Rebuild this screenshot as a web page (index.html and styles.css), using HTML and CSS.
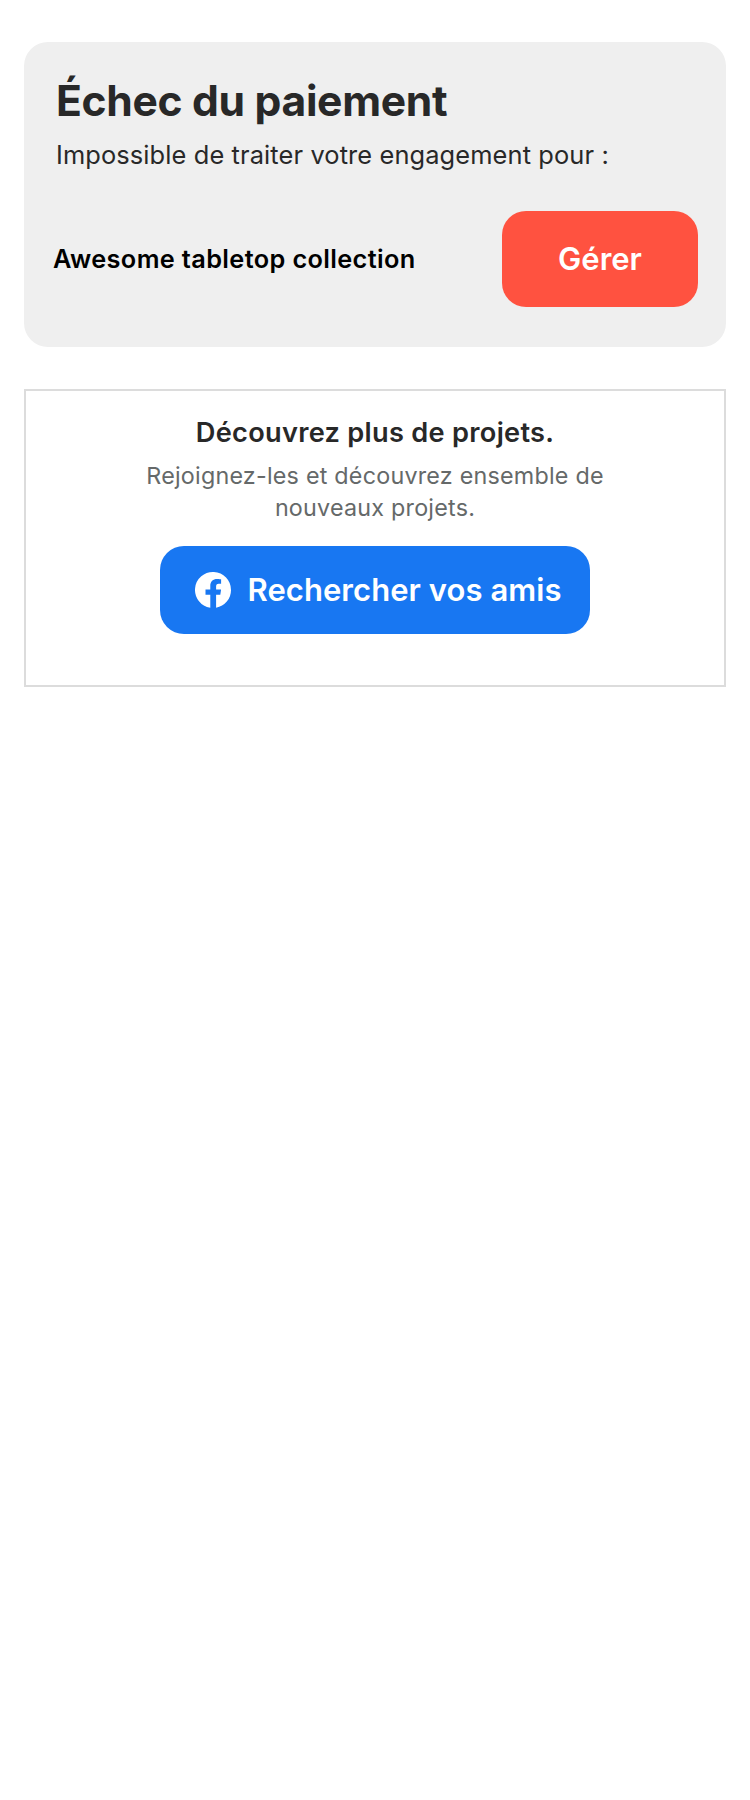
FILE: index.html
```html
<!DOCTYPE html>
<html lang="fr">
<head>
<meta charset="utf-8">
<title>Échec du paiement</title>
<link rel="stylesheet" href="styles.css">
</head>
<body>
<main class="page">
<section class="alert">
<h1 class="alert-title">Échec du paiement</h1>
<p class="alert-text">Impossible de traiter votre engagement pour :</p>
<div class="alert-row">
<span class="project">Awesome tabletop collection</span>
<button class="manage"><span class="manage-label">Gérer</span></button>
</div>
</section>
<section class="discover">
<h2 class="discover-title">Découvrez plus de projets.</h2>
<p class="discover-text"><span class="line-one">Rejoignez-les et découvrez ensemble de</span><br><span class="line-two">nouveaux projets.</span></p>
<button class="friends">
<svg class="fb" viewBox="0 0 36 36" aria-hidden="true"><path fill="#fff" d="M36 18A18 18 0 1 0 15.3 35.8V22.8H10.5V17.6h4.8v-3.7c0-4.5 2.7-6.9 6.8-6.9 2 0 4 .35 4 .35v4.4h-2.3c-2.2 0-2.7 1.4-2.7 2.8V17.6h5l-.8 5.2h-4.2v13A18 18 0 0 0 36 18Z"/></svg>
<span class="friends-label">Rechercher vos amis</span>
</button>
</section>
</main>
</body>
</html>
```

FILE: styles.css
```css
* { box-sizing: border-box; }
body { margin: 0; background: #fff; font-family: Inter, sans-serif; }
h1, h2, p { margin: 0; }
button { border: 0; font-family: inherit; color: #fff; }
.page { padding: 42px 24px 0; }
.alert { height: 305px; padding: 32px 28px 0 32px; border-radius: 24px; background: #efefef; color: #282828; }
.alert-title { font-size: 42.6px; line-height: 54px; font-weight: 700; letter-spacing: -.32px; white-space: nowrap; }
.alert-text { margin-top: 11px; font-size: 25.4px; line-height: 32px; letter-spacing: .12px; white-space: nowrap; }
.alert-row { display: flex; align-items: center; justify-content: space-between; margin: 40px 0 0 -4px; }
.project { padding: 0 0 2px 1px; color: #000; font-size: 25.3px; font-weight: 600; letter-spacing: .37px; white-space: nowrap; }
.manage { width: 196px; height: 96px; padding: 0 0 2px; border-radius: 24px; background: #ff5240; font-size: 31px; font-weight: 600; }
.discover { display: flex; flex-direction: column; align-items: center; height: 298px; margin-top: 42px; padding-top: 25px; border: 2px solid #dcdcdc; text-align: center; }
.discover-title { font-size: 27.2px; line-height: 34px; font-weight: 600; letter-spacing: .29px; color: #282828; white-space: nowrap; }
.discover-text { margin-top: 10px; font-size: 23.3px; line-height: 32px; letter-spacing: .23px; color: #656969; white-space: nowrap; }
.friends { display: flex; align-items: center; width: 430px; height: 88px; margin-top: 22px; padding: 0 0 0 35px; border-radius: 24px; background: #1877f2; font-size: 31px; font-weight: 600; }
.fb { width: 36px; height: 36px; margin-right: 16.5px; }
.friends-label { padding-bottom: 2px; letter-spacing: .06px; white-space: nowrap; }
```
